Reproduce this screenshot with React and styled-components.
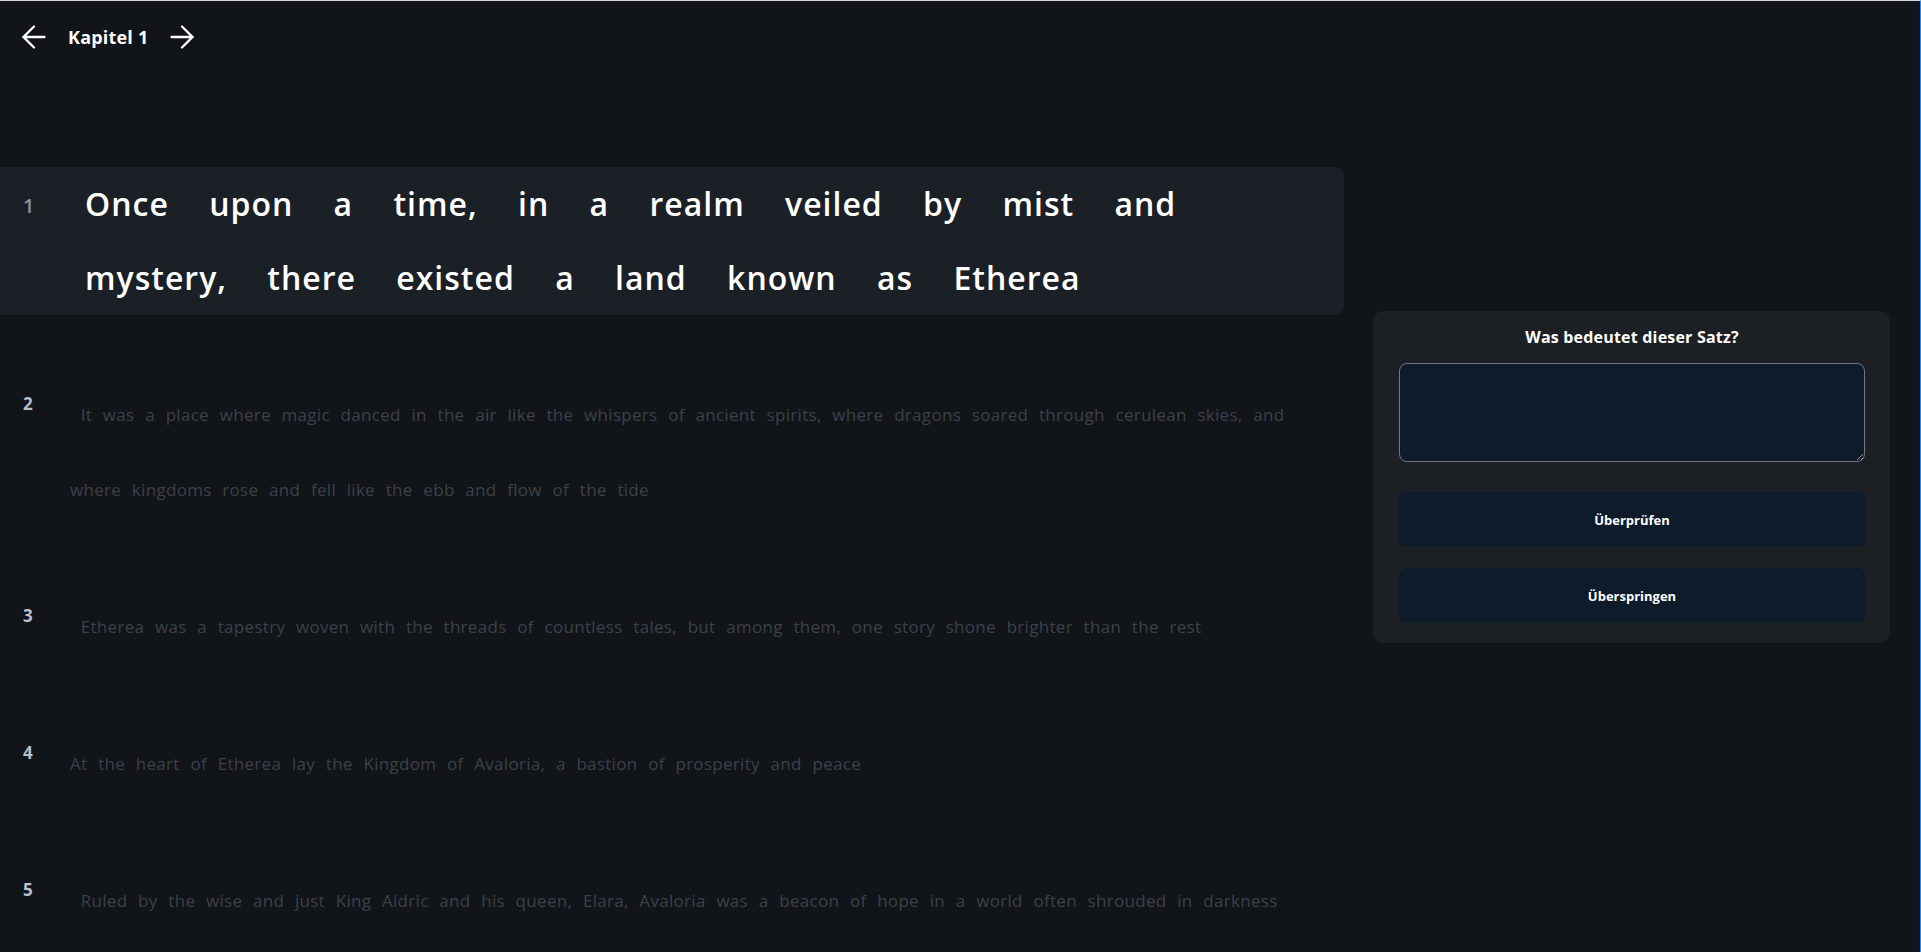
import styled, { createGlobalStyle } from 'styled-components'

const GlobalStyle = createGlobalStyle`
  * {
    box-sizing: border-box;
  }
  body {
    margin: 0;
    background-color: #111419;
    font-family: 'Open Sans', 'Noto Sans', sans-serif;
    color: #ffffff;
  }
`

const sentences = [
  'Once upon a time, in a realm veiled by mist and mystery, there existed a land known as Etherea',
  ' It was a place where magic danced in the air like the whispers of ancient spirits, where dragons soared through cerulean skies, and where kingdoms rose and fell like the ebb and flow of the tide',
  ' Etherea was a tapestry woven with the threads of countless tales, but among them, one story shone brighter than the rest',
  'At the heart of Etherea lay the Kingdom of Avaloria, a bastion of prosperity and peace',
  ' Ruled by the wise and just King Aldric and his queen, Elara, Avaloria was a beacon of hope in a world often shrouded in darkness',
]

const ArrowIcon = ({ direction }) => (
  <svg width="24" height="24" viewBox="0 0 24 24" fill="none">
    <g
      stroke="#ffffff"
      strokeWidth="2.3"
      strokeLinecap="round"
      strokeLinejoin="round"
      transform={direction === 'right' ? 'rotate(180 12 12)' : undefined}
    >
      <path d="M1.5 12H22.5" />
      <path d="M12 1.5L1.5 12L12 22.5" />
    </g>
  </svg>
)

const App = () => {
  const activeIndex = 0

  return (
    <>
      <GlobalStyle />
      <PageWrap>
        <Header>
          <NavButton aria-label="Vorheriges Kapitel">
            <ArrowIcon direction="left" />
          </NavButton>
          <ChapterTitle>Kapitel 1</ChapterTitle>
          <NavButton aria-label="Nächstes Kapitel">
            <ArrowIcon direction="right" />
          </NavButton>
        </Header>

        <Main>
          <SentenceList>
            {sentences.map((sentence, i) => (
              <SentenceRow key={i} $active={i === activeIndex}>
                <SentenceNumber $active={i === activeIndex}>{i + 1}</SentenceNumber>
                <SentenceText $active={i === activeIndex}>{sentence}</SentenceText>
              </SentenceRow>
            ))}
          </SentenceList>

          <QuizPanel>
            <QuizTitle>Was bedeutet dieser Satz?</QuizTitle>
            <AnswerInput />
            <ButtonGroup>
              <ActionButton>Überprüfen</ActionButton>
              <ActionButton>Überspringen</ActionButton>
            </ButtonGroup>
          </QuizPanel>
        </Main>
      </PageWrap>
    </>
  )
}

export default App

const PageWrap = styled.div`
  min-height: 100vh;
  border-top: 1px solid #d4d4d4;
  border-right: 1px solid #1d8fff;
`

const Header = styled.header`
  display: flex;
  align-items: center;
  gap: 22px;
  height: 72px;
  padding: 0 22px;
`

const NavButton = styled.button`
  display: flex;
  align-items: center;
  justify-content: center;
  padding: 0;
  background: transparent;
  border: none;
  cursor: pointer;
`

const ChapterTitle = styled.h1`
  margin: 0;
  font-size: 18px;
  font-weight: 700;
  line-height: 1;
  letter-spacing: 0.2px;
  color: #ffffff;
`

const Main = styled.main`
  display: flex;
  align-items: flex-start;
  gap: 29px;
  padding: 94px 30px 0 0;
`

const SentenceList = styled.div`
  flex: 0 0 1344px;
  display: flex;
  flex-direction: column;
  gap: 62px;
`

const SentenceRow = styled.div`
  display: flex;
  align-items: flex-start;
  background-color: ${(p) => (p.$active ? '#1b1f26' : 'transparent')};
  border-radius: 0 8px 8px 0;
`

const SentenceNumber = styled.span`
  flex: 0 0 70px;
  padding-left: 23px;
  margin-top: ${(p) => (p.$active ? '27px' : '15px')};
  font-size: ${(p) => (p.$active ? '20px' : '17px')};
  font-weight: ${(p) => (p.$active ? 600 : 700)};
  line-height: 24px;
  color: ${(p) => (p.$active ? '#8b9099' : '#b9c1cc')};
`

const SentenceText = styled.p`
  margin: 0;
  padding: ${(p) => (p.$active ? '0 140px 0 15px' : '0 50px 0 0')};
  white-space: pre-wrap;
  font-size: ${(p) => (p.$active ? '32px' : '17px')};
  font-weight: ${(p) => (p.$active ? 600 : 500)};
  line-height: ${(p) => (p.$active ? '74px' : '75px')};
  letter-spacing: ${(p) => (p.$active ? '1px' : '0.3px')};
  word-spacing: ${(p) => (p.$active ? '31px' : '6px')};
  color: ${(p) => (p.$active ? '#ffffff' : '#3d4149')};
`

const QuizPanel = styled.section`
  flex: 0 0 517px;
  margin-top: 144px;
  display: flex;
  flex-direction: column;
  align-items: stretch;
  padding: 16px 25px 20px 26px;
  background-color: #1c1f24;
  border-radius: 10px;
`

const QuizTitle = styled.h2`
  margin: 0 0 16px;
  text-align: center;
  font-size: 16px;
  font-weight: 700;
  line-height: 20px;
  letter-spacing: 0.2px;
  color: #ffffff;
`

const AnswerInput = styled.textarea`
  height: 99px;
  padding: 10px 12px;
  background-color: #0d1b2a;
  border: 1px solid #74787e;
  border-radius: 8px;
  color: #ffffff;
  font-family: inherit;
  font-size: 15px;
  outline: none;
`

const ButtonGroup = styled.div`
  display: flex;
  flex-direction: column;
  gap: 21px;
  margin-top: 30px;
`

const ActionButton = styled.button`
  height: 55px;
  background-color: #0d1b2a;
  border: none;
  border-radius: 8px;
  color: #ffffff;
  font-family: inherit;
  font-size: 13px;
  font-weight: 700;
  cursor: pointer;
`
